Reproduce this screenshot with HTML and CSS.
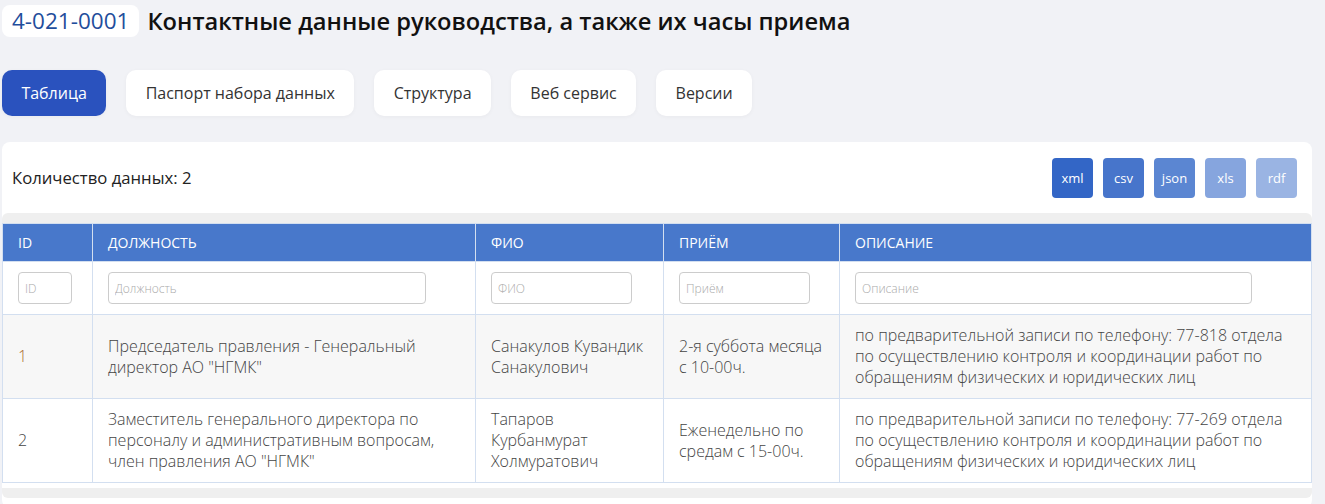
FILE: index.html
```html
<!DOCTYPE html>
<html lang="ru">
<head>
    <meta charset="UTF-8">
    <meta name="viewport" content="width=device-width, initial-scale=1.0">
    <title>Контактные данные руководства</title>
    <link rel="stylesheet" href="styles.css">
</head>
<body>
    <div class="page">
        <div class="title-row">
            <span class="code">4-021-0001</span>
            <h1>Контактные данные руководства, а также их часы приема</h1>
        </div>

        <nav class="tabs">
            <a href="#" class="tab active">Таблица</a>
            <a href="#" class="tab">Паспорт набора данных</a>
            <a href="#" class="tab">Структура</a>
            <a href="#" class="tab">Веб сервис</a>
            <a href="#" class="tab">Версии</a>
        </nav>

        <section class="card">
            <div class="card-head">
                <span class="count">Количество данных: 2</span>
                <div class="formats">
                    <a href="#" class="fmt fmt-xml">xml</a>
                    <a href="#" class="fmt fmt-csv">csv</a>
                    <a href="#" class="fmt fmt-json">json</a>
                    <a href="#" class="fmt fmt-xls">xls</a>
                    <a href="#" class="fmt fmt-rdf">rdf</a>
                </div>
            </div>
            <div class="scroll-bar"></div>
            <table class="data">
                <colgroup>
                    <col class="c-id">
                    <col class="c-pos">
                    <col class="c-name">
                    <col class="c-time">
                    <col class="c-desc">
                </colgroup>
                <thead>
                    <tr>
                        <th>ID</th>
                        <th>Должность</th>
                        <th>ФИО</th>
                        <th>Приём</th>
                        <th>Описание</th>
                    </tr>
                    <tr class="filters">
                        <td><input type="text" class="f-id" placeholder="ID"></td>
                        <td><input type="text" class="f-pos" placeholder="Должность"></td>
                        <td><input type="text" class="f-name" placeholder="ФИО"></td>
                        <td><input type="text" class="f-time" placeholder="Приём"></td>
                        <td><input type="text" class="f-desc" placeholder="Описание"></td>
                    </tr>
                </thead>
                <tbody>
                    <tr class="odd">
                        <td class="id hl">1</td>
                        <td>Председатель правления - Генеральный директор АО "НГМК"</td>
                        <td>Санакулов Кувандик Санакулович</td>
                        <td>2-я суббота месяца с 10-00ч.</td>
                        <td>по предварительной записи по телефону: 77-818 отдела по осуществлению контроля и координации работ по обращениям физических и юридических лиц</td>
                    </tr>
                    <tr>
                        <td class="id">2</td>
                        <td>Заместитель генерального директора по персоналу и административным вопросам, член правления АО "НГМК"</td>
                        <td>Тапаров Курбанмурат Холмуратович</td>
                        <td>Еженедельно по средам с 15-00ч.</td>
                        <td>по предварительной записи по телефону: 77-269 отдела по осуществлению контроля и координации работ по обращениям физических и юридических лиц</td>
                    </tr>
                </tbody>
            </table>
            <div class="scroll-bar bottom"></div>
        </section>
    </div>
</body>
</html>
```

FILE: styles.css
```css
body {
    margin: 0;
    padding: 0;
    background-color: #f1f2f6;
    font-family: "Open Sans", Arial, sans-serif;
    color: #333;
}
.page {
    width: 1310px;
    padding: 5px 0 0 2px;
}
.title-row {
    display: flex;
    align-items: center;
    gap: 8px;
}
.code {
    background-color: white;
    border-radius: 8px;
    padding: 0 10px;
    height: 32px;
    line-height: 32px;
    font-size: 22.5px;
    color: #1f4e9c;
}
h1 {
    margin: 0;
    font-size: 23.7px;
    font-weight: 600;
    color: #111;
}
.tabs {
    display: flex;
    gap: 20px;
    margin-top: 33px;
}
.tab {
    display: block;
    height: 46px;
    line-height: 46px;
    padding: 0 19.4px;
    background-color: white;
    border-radius: 10px;
    text-decoration: none;
    font-size: 16px;
    color: #333;
    box-shadow: 0 1px 4px rgba(0, 0, 0, 0.04);
}
.tab.active {
    background-color: #2a52be;
    color: white;
}
.card {
    margin-top: 26px;
    background-color: white;
    border-radius: 8px;
    padding-bottom: 10px;
}
.card-head {
    display: flex;
    justify-content: space-between;
    align-items: center;
    height: 71px;
    padding: 0 15px 0 10px;
}
.count {
    font-size: 16.7px;
    color: #222;
}
.formats {
    display: flex;
    gap: 10px;
    padding-top: 1px;
}
.fmt {
    display: block;
    width: 41px;
    height: 40px;
    line-height: 40px;
    text-align: center;
    border-radius: 4px;
    color: white;
    font-size: 13px;
    text-decoration: none;
}
.fmt-xml { background-color: #3366c6; }
.fmt-csv { background-color: #4775cb; }
.fmt-json { background-color: #5b86d2; }
.fmt-xls { background-color: #86a5de; }
.fmt-rdf { background-color: #9ab4e3; }
.scroll-bar {
    height: 10px;
    background-color: #efefef;
    border-radius: 6px 6px 0 0;
}
.scroll-bar.bottom {
    margin-top: 5px;
    border-radius: 0 0 6px 6px;
}
.data {
    width: 100%;
    border-collapse: collapse;
    table-layout: fixed;
    font-size: 16px;
    font-weight: 300;
}
.c-id { width: 90px; }
.c-pos { width: 383px; }
.c-name { width: 188px; }
.c-time { width: 176px; }
.data th {
    background-color: #4878cb;
    color: white;
    text-align: left;
    font-weight: 400;
    font-size: 14px;
    text-transform: uppercase;
    height: 37px;
    padding: 0 15px;
    border: 1px solid #d3dff0;
}
.data td {
    border: 1px solid #d3dff0;
    padding: 0 15px;
    line-height: 21px;
    color: #444;
    vertical-align: middle;
}
.data tbody td {
    height: 83px;
}
.data tr.odd td {
    background-color: #f7f7f7;
}
.data td.hl {
    color: #a9682c;
}
.filters td {
    height: 52px;
}
.filters input {
    display: block;
    height: 32px;
    box-sizing: border-box;
    border: 1px solid #ccc;
    border-radius: 4px;
    padding: 0 6px;
    font-family: "Open Sans", Arial, sans-serif;
    font-size: 12px;
    font-weight: 300;
    color: #333;
}
.filters input::placeholder {
    color: #aaa;
}
.f-id { width: 54px; }
.f-pos { width: 318px; }
.f-name { width: 141px; }
.f-time { width: 131px; }
.f-desc { width: 397px; }
```
